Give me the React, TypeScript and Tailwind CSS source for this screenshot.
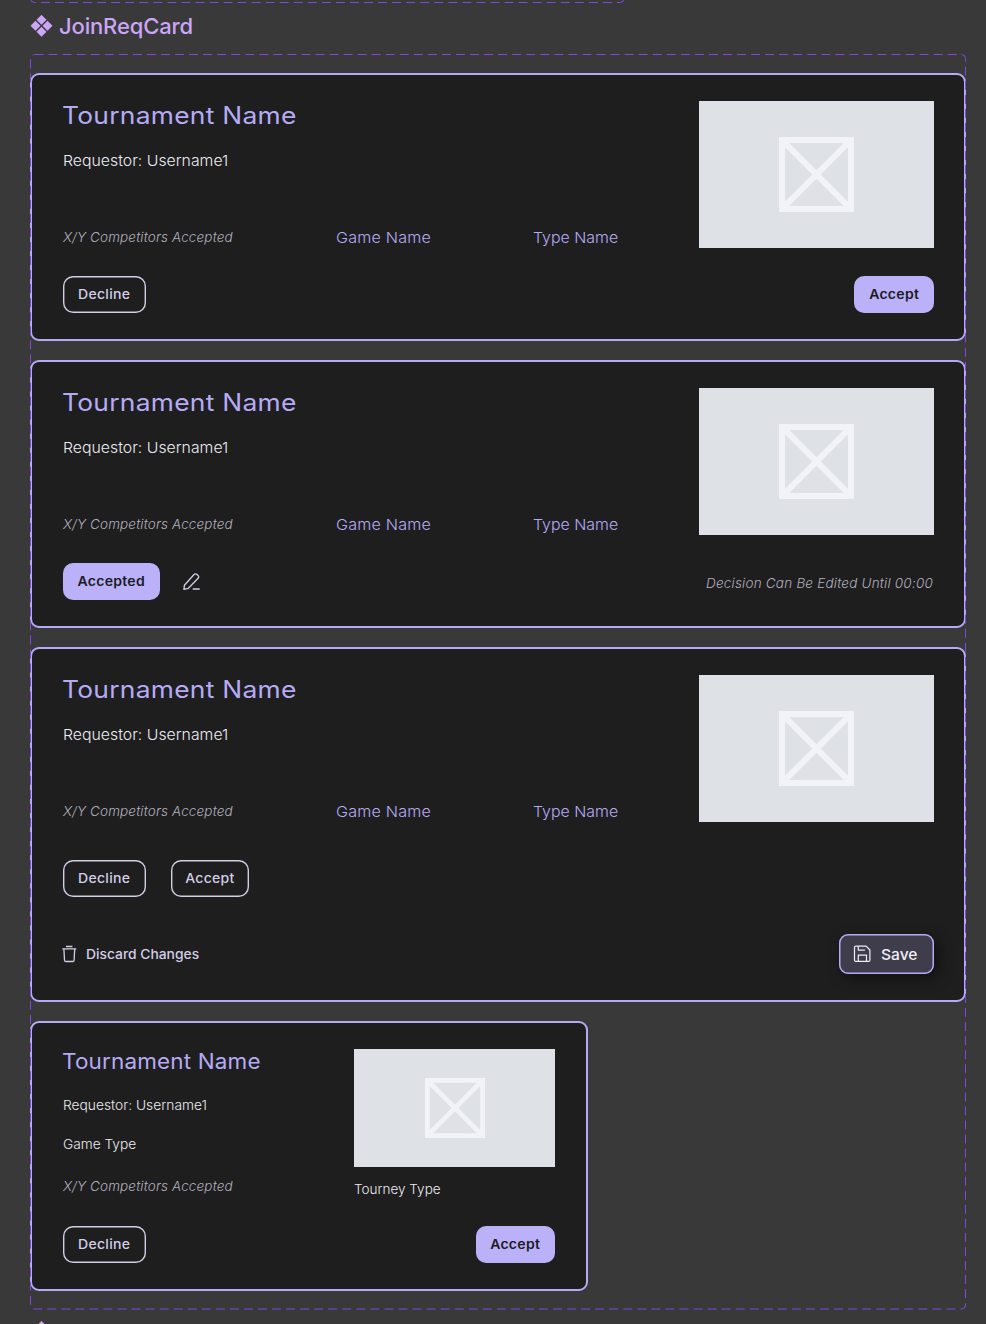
import React from 'react';

function ComponentIcon() {
  return (
    <svg width="23" height="22" viewBox="-0.5 0.2 23 22" fill="#cba6f7" className="shrink-0">
      <path d="M11 0l5 5-5 5-5-5zM11 12l5 5-5 5-5-5zM5 6l5 5-5 5-5-5zM17 6l5 5-5 5-5-5z" />
    </svg>
  );
}

function PencilIcon() {
  return (
    <svg width="18" height="18" viewBox="0 0 18 18" fill="none" stroke="#d3cee6" strokeWidth="1.3" strokeLinejoin="round" strokeLinecap="round">
      <path d="M0.9 16.4L1.4 12.3L10.8 1.8C11.8 0.7 12.8 0.6 13.9 1.4L15 2.4C16 3.4 15.9 4.3 15.1 5.3L5.4 15.3Z" />
      <path d="M10.2 16H16.2" />
    </svg>
  );
}

function TrashIcon() {
  return (
    <svg width="15" height="18" viewBox="0 0 15 18" fill="none" stroke="#d3cee6" strokeWidth="1.3" strokeLinejoin="round">
      <path d="M4 1.5H10.4M0.3 3.9H14.3M1.9 4L2.5 15.2Q2.6 16.5 3.9 16.5H10.8Q12 16.5 12.1 15.2L12.7 4" />
    </svg>
  );
}

function SaveIcon() {
  return (
    <svg width="18" height="18" viewBox="0 0 18 18" fill="none" stroke="#f0eef8" strokeWidth="1.2" strokeLinejoin="round">
      <path d="M2.7 1.2H13.1L16.9 5V15.2Q16.9 16.4 15.7 16.4H2.7Q1.5 16.4 1.5 15.2V2.4Q1.5 1.2 2.7 1.2Z" />
      <path d="M5.3 1.4V5.2H11.9M5.3 16.2V10.2H13.5V16.2" />
    </svg>
  );
}

function Placeholder({ small = false }: { small?: boolean }) {
  return (
    <div className={`flex shrink-0 items-center justify-center bg-[#dee1e6] ${small ? 'h-[118px] w-[201px]' : 'h-[147px] w-[235px] pr-px'}`}>
      <svg className={small ? 'h-[60px] w-[60px]' : 'h-[75px] w-[75px]'} viewBox="0 0 74 74" fill="none" stroke="#f2f3f8" strokeWidth="6">
        <rect x="3" y="3" width="68" height="68" />
        <path d="M5 5L69 69M69 5L5 69" />
      </svg>
    </div>
  );
}

type Kind = 'filled' | 'outline';

function PillButton({ label, kind, width }: { label: string; kind: Kind; width: string }) {
  const look =
    kind === 'filled'
      ? 'bg-[#bab1f8] font-semibold text-[#1b1a22]'
      : 'font-[450] text-[#d3cee6] shadow-[inset_0_0_0_1.4px_#d3cee6]';
  return (
    <button className={`flex h-[37px] items-center justify-center rounded-[10px] text-[13px] tracking-[0.25px] ${width} ${look}`}>
      <span className="scale-x-[1.08]">{label}</span>
    </button>
  );
}

const cardClass = 'rounded-[9px] border-2 border-[#b5abf5] bg-[#1e1e1e] pl-[31px] pt-[26px]';
const noteClass = 'text-[13.5px] font-light italic text-[#b3b0bf]';

function Summary() {
  return (
    <div className="flex h-[147px] justify-between">
      <div className="flex flex-col">
        <h2 className="-ml-px origin-left scale-x-[1.1] text-[24px] leading-[30px] tracking-[0.24px] text-[#b5abf5]">Tournament Name</h2>
        <p className="mt-5 origin-left scale-x-[1.055] text-[15px] font-[350] leading-5 text-[#ecebf1]">Requestor: Username1</p>
        <div className="-mb-px mt-auto grid grid-cols-[273px_197px_auto] leading-[22px]">
          <span className={`tracking-[0.15px] ${noteClass}`}>X/Y Competitors Accepted</span>
          <span className="origin-left scale-x-[1.075] pt-px text-[15px] font-[350] tracking-[0.18px] text-[#b5abf5]">Game Name</span>
          <span className="origin-left scale-x-[1.06] pt-px text-[15px] font-[350] text-[#b5abf5]">Type Name</span>
        </div>
      </div>
      <Placeholder />
    </div>
  );
}

function PendingCard() {
  return (
    <section className={`h-[268px] pr-[30px] ${cardClass}`}>
      <Summary />
      <div className="mt-7 flex justify-between">
        <PillButton label="Decline" kind="outline" width="w-[83px]" />
        <PillButton label="Accept" kind="filled" width="w-20" />
      </div>
    </section>
  );
}

function AcceptedCard() {
  return (
    <section className={`h-[268px] pr-[30px] ${cardClass}`}>
      <Summary />
      <div className="mt-7 flex items-center">
        <PillButton label="Accepted" kind="filled" width="w-[97px]" />
        <span className="ml-[23px]"><PencilIcon /></span>
        <span className={`ml-auto mr-px pt-[3px] tracking-[0.21px] ${noteClass}`}>Decision Can Be Edited Until 00:00</span>
      </div>
    </section>
  );
}

function EditingCard() {
  return (
    <section className={`h-[355px] pr-[30px] ${cardClass}`}>
      <Summary />
      <div className="mt-[38px] flex gap-[25px]">
        <PillButton label="Decline" kind="outline" width="w-[83px]" />
        <PillButton label="Accept" kind="outline" width="w-[78px]" />
      </div>
      <div className="mt-[37px] flex items-center justify-between">
        <button className="-ml-px flex items-center gap-[9px] text-[13px] font-[450] text-[#d3cee6]">
          <TrashIcon />
          <span className="origin-left scale-x-[1.065] pt-px">Discard Changes</span>
        </button>
        <button className="flex h-10 w-[95px] items-center gap-2.5 rounded-[9px] bg-[#3f3c4b] pl-3.5 text-[15px] font-[450] text-[#f0eef8] shadow-[inset_0_0_0_1.5px_#b5abf5,4px_4px_14px_rgba(0,0,0,0.5)]">
          <SaveIcon />
          <span className="origin-left scale-x-[1.04] pt-0.5">Save</span>
        </button>
      </div>
    </section>
  );
}

function CompactCard() {
  return (
    <section className={`h-[270px] w-[558px] pr-[31px] ${cardClass}`}>
      <div className="flex justify-between">
        <div className="flex flex-col text-[13px] leading-5 text-[#ecebf1]">
          <h2 className="-ml-px origin-left scale-x-[1.07] text-[21px] leading-[26px] tracking-[0.15px] text-[#b5abf5]">Tournament Name</h2>
          <p className="mt-5 origin-left scale-x-[1.06] font-[350]">Requestor: Username1</p>
          <p className="mt-[19px] origin-left scale-x-[1.055] font-[350]">Game Type</p>
          <p className={`mt-[22px] tracking-[0.15px] ${noteClass}`}>X/Y Competitors Accepted</p>
        </div>
        <div className="flex flex-col">
          <Placeholder small />
          <p className="mt-3 origin-left scale-x-[1.04] text-[13px] font-[350] leading-5 text-[#ecebf1]">Tourney Type</p>
        </div>
      </div>
      <div className="mt-[27px] flex justify-between">
        <PillButton label="Decline" kind="outline" width="w-[83px]" />
        <PillButton label="Accept" kind="filled" width="w-[79px]" />
      </div>
    </section>
  );
}

export default function App() {
  return (
    <main className="relative flex h-[1324px] w-[986px] flex-col overflow-hidden bg-[#393939] pl-[30px] pr-5 font-['Inter',sans-serif]">
      <header className="mt-[11px] flex h-[30px] items-center gap-[6px] text-[22px] font-[450] tracking-[-0.15px] text-[#cba6f7]">
        <ComponentIcon />
        JoinReqCard
      </header>
      <div className="mt-8 flex flex-col gap-[19px]">
        <PendingCard />
        <AcceptedCard />
        <EditingCard />
        <CompactCard />
      </div>
      <svg className="pointer-events-none absolute inset-0" width="986" height="1324" fill="none" stroke="#8546e0" strokeDasharray="9 5.05">
        <rect x="30.5" y="-60" width="593.5" height="62.5" rx="4" />
        <rect x="30.5" y="54.5" width="935" height="1254.5" rx="4" />
        <path d="M41.5 1321l4 4h-8z" fill="#cba6f7" stroke="none" />
      </svg>
    </main>
  );
}
